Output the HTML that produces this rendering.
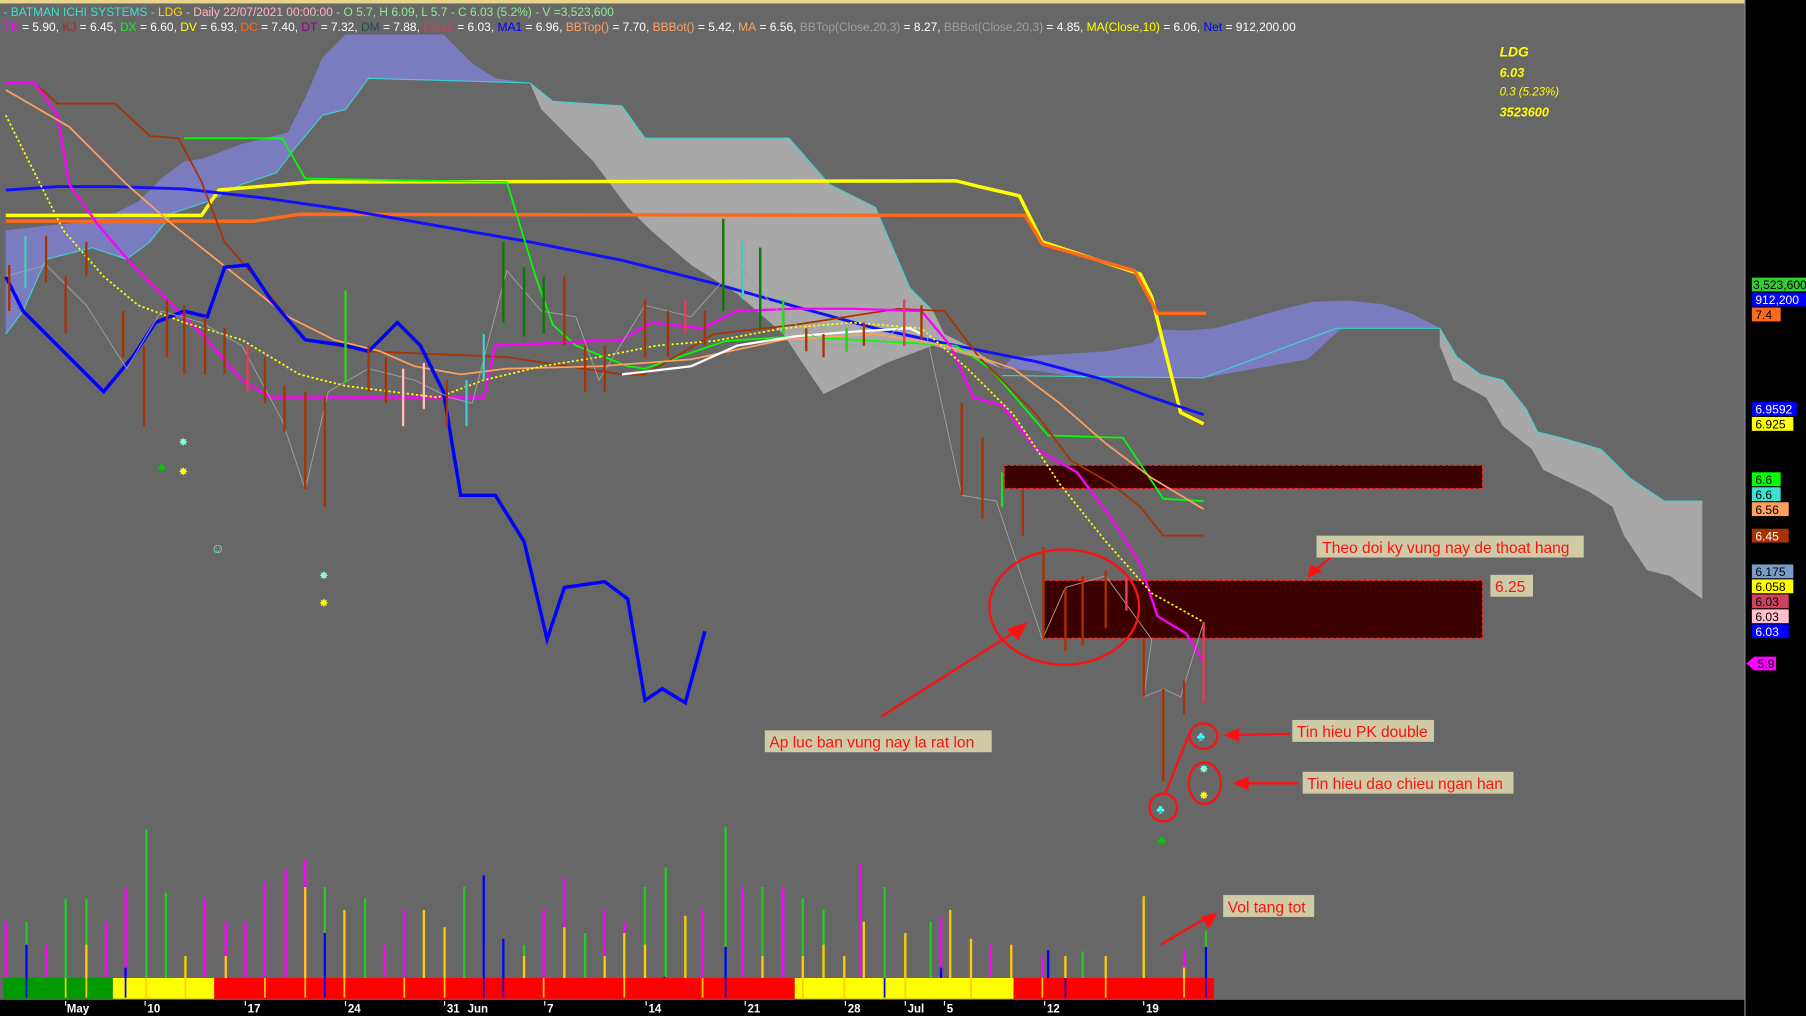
<!DOCTYPE html>
<html><head><meta charset="utf-8">
<style>
html,body{margin:0;padding:0;background:#000;}
svg{display:block;}
text{font-family:"Liberation Sans",Arial,sans-serif;}
</style></head>
<body>
<svg width="1806" height="1016" viewBox="0 0 1568 882" preserveAspectRatio="none" xmlns="http://www.w3.org/2000/svg">
<rect x="0" y="0" width="1568" height="882" fill="#000"/>
<rect x="0" y="0" width="1515" height="868" fill="#676767"/>
<rect x="0" y="0" width="1515" height="3" fill="#e8d48a"/>
<line x1="1515" y1="0" x2="1515" y2="882" stroke="#888" stroke-width="1"/>

<!-- header -->
<text x="3" y="14" font-size="10.5" textLength="530" lengthAdjust="spacingAndGlyphs"><tspan fill="#40e0d0">- BATMAN  ICHI SYSTEMS - </tspan><tspan fill="#ffd700">LDG</tspan><tspan fill="#ffb6c1"> - Daily 22/07/2021 00:00:00 </tspan><tspan fill="#90ee90">- O 5.7, H 6.09, L 5.7 - C 6.03 (5.2%) - V =3,523,600</tspan></text>
<text x="3" y="27" font-size="10.5" fill="#fff" textLength="1122" lengthAdjust="spacingAndGlyphs"><tspan fill="#ff00ff">TK</tspan> = 5.90, <tspan fill="#b22222">KJ</tspan> = 6.45, <tspan fill="#00ff00">DX</tspan> = 6.60, <tspan fill="#ffff00">DV</tspan> = 6.93, <tspan fill="#ff6a1a">DC</tspan> = 7.40, <tspan fill="#8b008b">DT</tspan> = 7.32, <tspan fill="#1f4f4f">DM</tspan> = 7.88, <tspan fill="#d04060">Close</tspan> = 6.03, <tspan fill="#0000ff">MA1</tspan> = 6.96, <tspan fill="#ffa060">BBTop()</tspan> = 7.70, <tspan fill="#ffa060">BBBot()</tspan> = 5.42, <tspan fill="#ffa060">MA</tspan> = 6.56, <tspan fill="#a0a0a0">BBTop(Close,20,3)</tspan> = 8.27, <tspan fill="#a0a0a0">BBBot(Close,20,3)</tspan> = 4.85, <tspan fill="#ffff00">MA(Close,10)</tspan> = 6.06, <tspan fill="#0000ff">Net</tspan> = 912,200.00</text>

<!-- LDG box -->
<g font-family="Liberation Serif" font-style="italic" font-weight="bold" fill="#ffff00">
<text x="1302" y="49" font-size="12">LDG</text>
<text x="1302" y="67" font-size="11">6.03</text>
<text x="1302" y="83" font-size="10" font-weight="normal">0.3 (5.23%)</text>
<text x="1302" y="101" font-size="11">3523600</text>
</g>

<!-- purple cloud left -->
<polygon points="5,200 40,196 70,193 100,185 120,175 140,155 160,140 175,138 210,125 250,115 265,85 280,50 300,30 385,30 410,55 430,68 460,72 320,68 300,95 280,100 255,130 240,150 210,160 180,175 150,185 130,210 110,225 80,215 40,225 20,270 5,290" fill="#7b7bbf"/>
<polyline points="5,290 20,270 40,225 80,215 110,225 130,210 150,185 180,175 210,160 240,150 255,130 280,100 300,95 320,68 460,72" fill="none" stroke="#40d0d0" stroke-width="1"/>
<!-- gray cloud -->
<polygon points="460,72 480,88 540,92 560,120 685,120 720,160 760,180 790,250 810,270 820,290 840,300 870,320 845,310 810,300 770,315 740,330 715,342 700,320 680,290 640,255 600,230 565,200 545,180 515,140 490,115 470,95" fill="#a8a8a8"/>
<polyline points="460,72 480,88 540,92 560,120 685,120 720,160 760,180 790,250 810,270" fill="none" stroke="#40d0d0" stroke-width="1"/>
<!-- right cloud purple -->
<polygon points="870,320 880,310 960,305 1000,298 1010,286 1030,287 1055,285 1080,278 1115,268 1140,262 1170,261 1200,264 1225,272 1245,282 1250,285 1205,285 1165,285 1135,312 1045,328 1000,328 940,328 900,322" fill="#7b7bbf"/>
<polyline points="870,326 1045,328 1160,285 1250,285" fill="none" stroke="#40d0d0" stroke-width="1"/>
<!-- right cloud gray -->
<polygon points="1250,285 1265,310 1285,325 1305,330 1325,355 1335,375 1355,380 1390,390 1415,415 1445,435 1478,435 1478,520 1450,500 1430,495 1410,465 1400,440 1380,427 1340,408 1330,390 1305,370 1290,345 1262,330 1250,300" fill="#a8a8a8"/>
<polyline points="1250,285 1265,310 1285,325 1305,330 1325,355 1335,375 1355,380 1390,390 1415,415 1445,435 1478,435" fill="none" stroke="#40d0d0" stroke-width="1"/>

<!-- dark boxes -->
<rect x="872" y="404" width="415" height="20" fill="#3d0000" stroke="#ff2020" stroke-width="1" stroke-dasharray="3,2"/>
<rect x="906" y="504" width="381" height="50" fill="#3d0000" stroke="#ff2020" stroke-width="1" stroke-dasharray="3,2"/>

<!-- lines -->
<polyline points="5,187 175,187 190,165 270,158 830,157 850,162 885,170 905,210 990,238 1000,258 1025,358 1045,368" fill="none" stroke="#ffff00" stroke-width="3"/>
<polyline points="5,192 220,192 260,186 890,187 905,212 985,235 1005,272 1047,272" fill="none" stroke="#ff6a1a" stroke-width="3"/>
<polyline points="5,165 50,162 100,162 160,164 230,172 300,182 380,196 460,210 540,226 620,246 690,266 760,285 820,298 900,314 960,330 1000,345 1045,360" fill="none" stroke="#1010ff" stroke-width="2.5"/>
<polyline points="160,120 245,120 265,155 440,158 465,240 480,282 500,300 525,310 545,318 560,320 630,296 690,292 830,300 860,320 910,378 975,380 1010,433 1045,435" fill="none" stroke="#00ff00" stroke-width="1.5"/>
<polyline points="5,72 30,72 50,90 100,90 130,118 155,120 175,158 195,210 225,245 265,295 320,305 440,310 540,325 560,325 620,290 690,282 780,268 820,270 850,310 870,330 900,360 930,400 965,420 990,440 1010,465 1045,465" fill="none" stroke="#a83200" stroke-width="1.5"/>
<polyline points="5,72 30,72 50,100 60,160 85,195 115,230 145,260 175,290 210,330 235,345 390,345 420,345 430,300 540,295 565,280 610,285 640,270 690,268 740,268 800,270 825,300 845,345 870,352 900,390 935,410 965,450 990,490 1005,535 1030,550 1045,575" fill="none" stroke="#ff00ff" stroke-width="2"/>
<polyline points="5,78 60,110 110,160 150,195 200,235 250,275 290,295 330,305 360,318 400,325 440,320 520,318 600,312 680,295 760,290 820,300 880,320 920,350 960,385 1000,415 1045,442" fill="none" stroke="#ffa060" stroke-width="1.5"/>
<polyline points="5,100 30,150 55,200 90,240 120,265 160,280 210,295 260,325 300,335 340,340 380,345 420,330 470,318 520,310 570,300 620,296 680,285 740,280 800,285 840,320 880,360 920,420 960,470 1000,515 1045,540" fill="none" stroke="#ffff00" stroke-width="1.5" stroke-dasharray="2,2"/>
<polyline points="540,325 600,318 640,300 690,292 740,288 790,285 800,290" fill="none" stroke="#ffffff" stroke-width="2"/>
<polyline points="5,240 20,270 50,300 90,340 115,310 135,280 160,270 180,275 195,232 215,230 235,260 265,295 300,300 320,305 345,280 365,300 385,340 400,430 430,430 455,470 475,555 490,510 525,505 545,520 560,608 575,598 595,610 612,548" fill="none" stroke="#0000ff" stroke-width="3"/>
<polyline points="5,240 40,230 75,265 110,320 140,270 175,280 210,300 245,365 265,425 285,340 320,320 360,330 390,345 410,350 440,235 470,270 500,275 520,330 560,265 600,275 640,230 680,275 720,300 760,300 800,270 835,430 865,435 905,555 925,510 960,500 1000,555 993,605 1010,598 1025,605 1045,540" fill="none" stroke="#a0a0a0" stroke-width="0.8"/>

<!-- candles -->
<g stroke-width="2">
<path d="M8 230v40M22 205v45M40 205v40M57 240v50M75 210v30M107 270v40M125 300v70M145 260v50M160 265v60M178 275v50M195 285v40M215 300v40M230 310v40M247 335v40M265 340v85M282 345v95M300 252v80M320 300v40M335 310v40M350 320v50M368 315v40M388 330v40M405 330v40M420 290v40M437 210v70M455 232v60M472 240v50M490 240v60M508 300v40M525 300v40M560 260v50M580 270v40M595 260v30M612 270v30M628 190v80M645 210v50M660 215v70M680 260v30M700 285v20M715 290v20M735 285v20M750 280v20M785 260v40M800 265v30M835 350v80M853 380v70M870 410v30M888 425v40M906 475v80M925 510v55M940 500v60M960 495v50M978 500v30M993 555v50M1010 598v80M1028 590v30M1045 540v70" stroke="#a83200" fill="none"/>
<path d="M437 210v70M455 232v60M472 240v50M660 215v70M628 190v80" stroke="#0a7a0a" fill="none"/>
<path d="M300 252v80M680 260v30M735 285v20M870 410v30" stroke="#22dd22" fill="none"/>
<path d="M22 205v45M645 210v50M420 290v40M405 330v40" stroke="#40d0d0" fill="none"/>
<path d="M350 320v50M368 315v40" stroke="#ffc0c8" fill="none"/>
<path d="M215 300v40M595 260v30M785 260v40M1045 540v70M978 500v30" stroke="#e04060" fill="none"/>
</g>

<!-- signals -->
<text x="155" y="387" font-size="10" fill="#7fffd4">✸</text>
<text x="155" y="413" font-size="10" fill="#ffff00">✸</text>
<text x="137" y="409" font-size="10" fill="#00cc00">♣</text>
<text x="277" y="503" font-size="10" fill="#7fffd4">✸</text>
<text x="277" y="527" font-size="10" fill="#ffff00">✸</text>
<text x="183" y="480" font-size="12" fill="#7fffd4">☺</text>
<text x="1005" y="733" font-size="11" fill="#00cc00">♣</text>

<!-- volume bars -->
<g stroke-width="2" fill="none">
<path d="M5 800V866M40 820V866M92 800V866M109 770V866M178 780V866M196 800V866M213 800V866M230 765V866M248 755V866M265 746V866M299 800V866M334 820V866M351 790V866M386 805V866M472 790V866M490 762V866M525 790V866M542 800V866M610 790V866M645 770V866M680 770V866M747 750V866M817 796V866M860 820V866M905 830V866M1028 825V866" stroke="#ff00ff"/>
<path d="M23 800V866M57 780V866M75 780V866M127 720V866M144 775V866M161 830V866M282 770V866M317 780V866M403 770V866M455 820V866M508 810V866M560 770V866M578 753V866M630 718V866M662 770V866M697 780V866M715 790V866M768 770V866M786 815V866M808 800V866M940 826V866M993 830V866M1047 808V866" stroke="#22cc22"/>
<path d="M57 850V866M75 820V866M161 830V866M196 830V866M265 770V866M299 790V866M368 790V866M386 805V866M420 820V866M455 830V866M490 805V866M525 830V866M542 810V866M560 820V866M595 795V866M662 830V866M697 830V866M715 820V866M733 830V866M750 800V866M786 810V866M825 790V866M843 815V866M878 820V866M925 830V866M960 830V866M993 778V866M1028 840V866" stroke="#ffcc00"/>
<path d="M23 820V866M109 840V866M282 810V866M420 760V866M437 815V866M577 848V866M630 822V866M817 840V866M910 825V866M1047 822V866" stroke="#0000ff"/>
</g>
<rect x="3" y="849" width="95" height="18" fill="#009900"/>
<rect x="98" y="849" width="88" height="18" fill="#ffff00"/>
<rect x="186" y="849" width="504" height="18" fill="#ff0000"/>
<rect x="690" y="849" width="190" height="18" fill="#ffff00"/>
<rect x="880" y="849" width="174" height="18" fill="#ff0000"/>
<g stroke-width="1.5" fill="none">
<path d="M57 849V866M75 849V866M127 849V866M161 849V866M230 849V866M265 849V866M299 849V866M351 849V866M386 849V866M472 849V866M542 849V866M610 849V866M697 849V866M733 849V866M786 849V866M843 849V866M905 849V866M960 849V866M1028 849V866" stroke="#ffcc00"/>
<path d="M23 849V866M109 849V866M282 849V866M420 849V866M437 849V866M630 849V866M768 849V866M925 849V866M1047 849V866" stroke="#0000ff"/>
</g>

<!-- x axis -->
<g font-size="10" fill="#fff" font-weight="bold">
<text x="58" y="879">May</text><text x="128" y="879">10</text><text x="215" y="879">17</text><text x="302" y="879">24</text><text x="388" y="879">31</text><text x="406" y="879">Jun</text><text x="475" y="879">7</text><text x="563" y="879">14</text><text x="649" y="879">21</text><text x="736" y="879">28</text><text x="788" y="879">Jul</text><text x="822" y="879">5</text><text x="909" y="879">12</text><text x="995" y="879">19</text>
</g>
<g stroke="#fff" stroke-width="1"><path d="M57 869v4M126 869v4M213 869v4M300 869v4M386 869v4M473 869v4M561 869v4M647 869v4M734 869v4M786 869v4M820 869v4M907 869v4M993 869v4"/></g>

<!-- right axis labels -->
<g font-size="10.5">
<rect x="1521" y="241" width="47" height="12" fill="#32cd32"/><text x="1522" y="251" fill="#000">3,523,600</text>
<rect x="1521" y="254" width="47" height="12" fill="#0000ff"/><text x="1524" y="264" fill="#fff">912,200</text>
<rect x="1521" y="267" width="25" height="12" fill="#ff6a1a"/><text x="1524" y="277" fill="#000">7.4</text>
<rect x="1521" y="349" width="39" height="12" fill="#0000ff"/><text x="1524" y="359" fill="#fff">6.9592</text>
<rect x="1521" y="362" width="36" height="12" fill="#ffff00"/><text x="1524" y="372" fill="#000">6.925</text>
<rect x="1521" y="410" width="25" height="12" fill="#00ff00"/><text x="1524" y="420" fill="#000">6.6</text>
<rect x="1521" y="423" width="25" height="12" fill="#40e0d0"/><text x="1524" y="433" fill="#000">6.6</text>
<rect x="1521" y="436" width="32" height="12" fill="#ffa060"/><text x="1524" y="446" fill="#000">6.56</text>
<rect x="1521" y="459" width="32" height="12" fill="#a83200"/><text x="1524" y="469" fill="#fff">6.45</text>
<rect x="1521" y="490" width="36" height="12" fill="#7b9cc8"/><text x="1524" y="500" fill="#000">6.175</text>
<rect x="1521" y="503" width="36" height="12" fill="#ffff00"/><text x="1524" y="513" fill="#000">6.058</text>
<rect x="1521" y="516" width="32" height="12" fill="#d04060"/><text x="1524" y="526" fill="#000">6.03</text>
<rect x="1521" y="529" width="32" height="12" fill="#ffc0cb"/><text x="1524" y="539" fill="#000">6.03</text>
<rect x="1521" y="542" width="32" height="12" fill="#0000ff"/><text x="1524" y="552" fill="#fff">6.03</text>
<polygon points="1516,576 1523,570 1542,570 1542,582 1523,582" fill="#ff00ff"/><text x="1526" y="580" fill="#000">5.9</text>
</g>

<!-- annotations -->
<g stroke="#ff1010" stroke-width="2" fill="none">
<ellipse cx="924" cy="527" rx="65" ry="50"/>
<ellipse cx="1045" cy="639" rx="12" ry="11"/>
<ellipse cx="1046" cy="680" rx="14" ry="18"/>
<ellipse cx="1010" cy="701" rx="12" ry="12"/>
<line x1="1012" y1="688" x2="1033" y2="636"/>
<line x1="765" y1="622" x2="882" y2="548"/>
<line x1="1155" y1="484" x2="1142" y2="495"/>
<line x1="1120" y1="637" x2="1075" y2="638"/>
<line x1="1127" y1="680" x2="1082" y2="680"/>
<line x1="1008" y1="820" x2="1045" y2="798"/>
</g>
<g fill="#ff1010">
<polygon points="892,540 874,546 884,556"/>
<polygon points="1135,502 1138,490 1148,496"/>
<polygon points="1062,638 1076,632 1076,644"/>
<polygon points="1070,680 1084,674 1084,686"/>
<polygon points="1057,792 1050,806 1042,796"/>
</g>
<text x="1039" y="643" font-size="11" fill="#40ffff">♣</text>
<text x="1004" y="706" font-size="11" fill="#40ffff">♣</text>
<text x="1041" y="671" font-size="10" fill="#7fffd4">✸</text>
<text x="1041" y="694" font-size="10" fill="#ffff00">✸</text>
<g font-size="13.5" fill="#ff1010">
<rect x="1143" y="465" width="232" height="19" fill="#cfcba6"/><text x="1148" y="480">Theo doi ky vung nay de thoat hang</text>
<rect x="1294" y="499" width="37" height="19" fill="#cfcba6"/><text x="1298" y="514">6.25</text>
<rect x="664" y="634" width="197" height="19" fill="#cfcba6"/><text x="668" y="649">Ap luc ban vung nay la rat lon</text>
<rect x="1122" y="625" width="123" height="19" fill="#cfcba6"/><text x="1126" y="640">Tin hieu PK double</text>
<rect x="1131" y="670" width="183" height="19" fill="#cfcba6"/><text x="1135" y="685">Tin hieu dao chieu ngan han</text>
<rect x="1062" y="777" width="79" height="19" fill="#cfcba6"/><text x="1066" y="792">Vol tang tot</text>
</g>
</svg>
</body></html>
